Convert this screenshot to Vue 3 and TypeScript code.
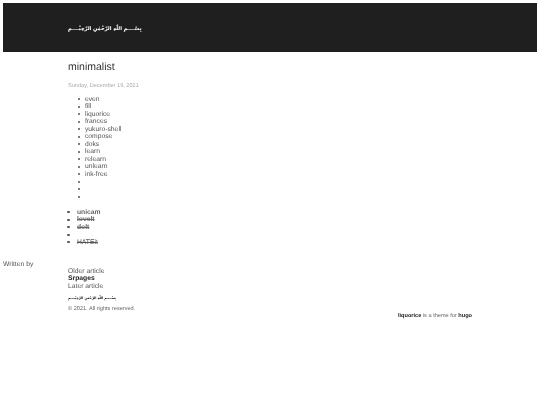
<script setup lang="ts">
const first: string[] = ['even', 'fill', 'liquorice', 'frances', 'yukuro-shell', 'compose', 'doks', 'learn', 'relearn', 'unlearn', 'ink-free', '', '', '']
const second = [
  { text: 'unicam', cls: 'bold' },
  { text: 'lovelt', cls: 'bold strike' },
  { text: 'dolt', cls: 'bold strike' },
  { text: '', cls: '' },
  { text: 'HATEit', cls: 'strike' },
]
const bismillah = 'بِسْــــمِ اللّٰهِ الرَّحْمٰنِ الرَّحِيْــــمِ'
</script>

<template>
  <div class="page">
    <header class="banner">
      <span class="logo" dir="rtl">{{ bismillah }}</span>
    </header>
    <main class="article">
      <h1 class="title">minimalist</h1>
      <p class="date">Sunday, December 19, 2021</p>
      <ul class="list first">
        <li v-for="(item, i) in first" :key="i"><span>{{ item }}</span></li>
      </ul>
      <ul class="list second">
        <li v-for="(item, i) in second" :key="i" :class="item.cls"><span>{{ item.text }}</span></li>
      </ul>
    </main>
    <div class="author">Written by</div>
    <nav class="pager">
      <div>Older article</div>
      <div class="bold">Srpages</div>
      <div>Later article</div>
    </nav>
    <footer class="foot">
      <div class="foot-logo"><span dir="rtl">{{ bismillah }}</span></div>
      <div class="copy">© 2021. All rights reserved.</div>
      <div class="credit"><b>liquorice</b> is a theme for <b>hugo</b></div>
    </footer>
  </div>
</template>

<style>
html, body { margin: 0; background: #fff; }
</style>

<style scoped>
.page {
  padding: 3px;
  font-family: "Liberation Sans", Arial, sans-serif;
  font-size: 6.75px;
  line-height: 7.5px;
  color: #555;
  text-rendering: geometricPrecision;
  filter: blur(0.25px);
}
.banner {
  height: 46px;
  padding-top: 3px;
  background: #1f1f1f;
  display: flex;
  align-items: center;
  padding-left: 65px;
}
.logo {
  font-family: "DejaVu Sans", sans-serif;
  font-size: 5.05px;
  font-weight: 700;
  line-height: 10px;
  color: #fff;
}
.article { padding-left: 65px; }
.title {
  margin: 9px 0 0;
  font-size: 10.5px;
  line-height: 13px;
  font-weight: 400;
  color: #333;
}
.date {
  margin: 9px 0 0;
  font-size: 5.6px;
  color: #aaa;
}
.list { margin: 5px 0 0; padding: 0; list-style: none; }
.list li { display: flex; align-items: center; min-height: 7.5px; }
.list li::before {
  content: "";
  flex: none;
  width: 2.2px;
  height: 2.2px;
  border-radius: 50%;
  background: #555;
}
.first { padding-left: 17px; }
.first li::before { margin-left: -7.1px; margin-right: 4.9px; }
.second { margin-top: 8px; padding-left: 9px; }
.second li::before { margin-left: -9.6px; margin-right: 7.4px; }
.bold { font-weight: 700; }
.second .bold { color: #666; }
.strike span { text-decoration: line-through; }
.author { margin-top: 15px; margin-bottom: -1px; }
.pager { padding-left: 65px; }
.pager .bold { color: #222; }
.foot { position: relative; padding-left: 65px; padding-bottom: 12px; }
.foot-logo {
  margin-top: 3.5px;
  font-family: "DejaVu Sans", sans-serif;
  font-size: 3.3px;
  font-weight: 700;
  line-height: 8px;
  color: #111;
  white-space: nowrap;
}
.copy { margin-top: 4px; font-size: 5.6px; color: #666; }
.credit {
  position: absolute;
  left: 395px;
  bottom: 5px;
  font-size: 5.6px;
  color: #666;
}
.credit b { color: #222; }
</style>
